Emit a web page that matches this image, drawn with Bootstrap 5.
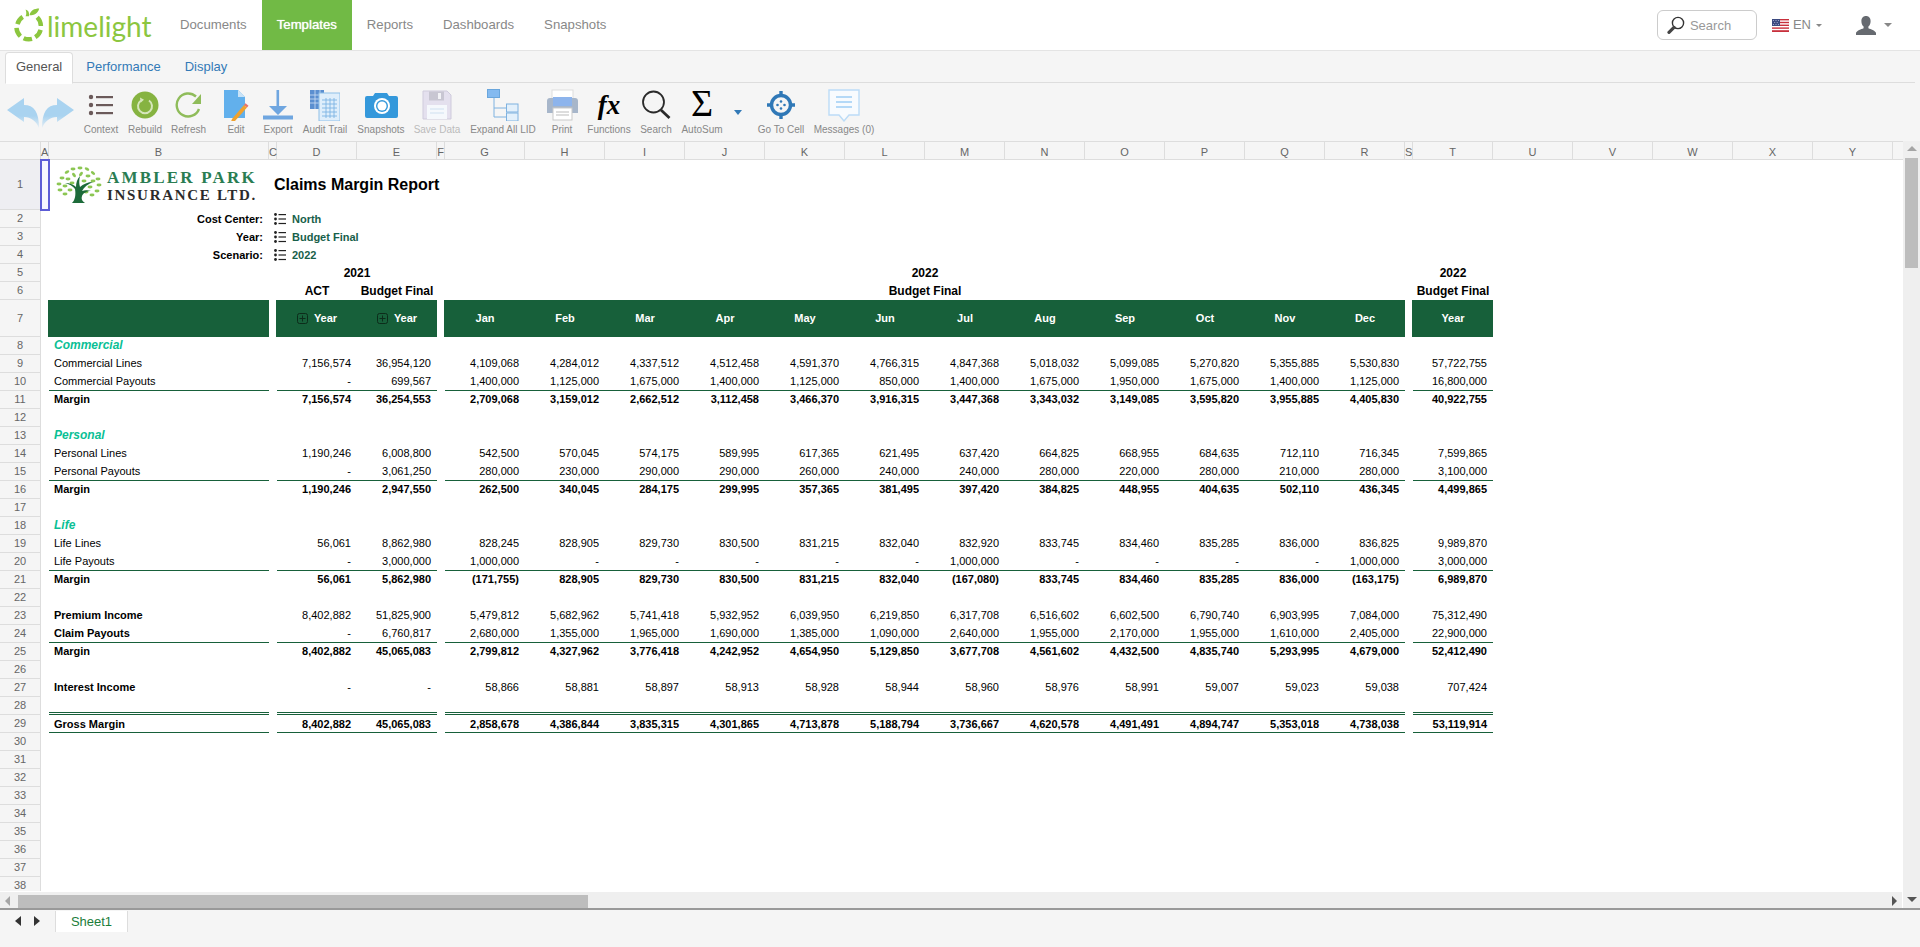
<!DOCTYPE html>
<html lang="en">
<head>
<meta charset="utf-8">
<title>Claims Margin Report</title>
<link rel="stylesheet" href="https://cdn.jsdelivr.net/npm/bootstrap@5.3.0/dist/css/bootstrap.min.css">
<style>
html,body{height:947px;overflow:hidden}
body{background:#f5f5f5;font-family:"Liberation Sans",Arial,sans-serif;font-size:14px;color:#000}
.app-frame{height:947px}
.top-bar{height:51px;background:#fff;border-bottom:1px solid #e4e4e4;padding:0}
.brand-box{flex:none;width:165px;height:50px;padding:7px 0 0 13px;margin:0;gap:3px;text-decoration:none}
.brand-box svg{flex:none}
.brand-word{font-family:Lato,"Open Sans",sans-serif;font-size:28px;line-height:34px;margin-top:2px;color:#8cc63f;font-weight:400}
.navbar-expand.top-bar .navbar-nav .nav-link{height:50px;padding:0 15px;line-height:50px;color:#888;font-size:13.2px}
.navbar-expand.top-bar .navbar-nav .nav-link.active{background:#71ba45;color:#fff;text-shadow:0 0 1px #fff}
.tools-right{margin-top:10px}
.find-box{width:100px;height:30px;border:1px solid #ccc;border-radius:6px;background:#fff;padding:0 0 0 9px;gap:5px;margin-right:15px}
.find-input{border:0;padding:0;width:62px;font-size:13px;height:26px;background:transparent;box-shadow:none;outline:0}
.find-input::placeholder{color:#999}
.lang-pick{color:#888;font-size:13px;gap:4px;margin-right:34px;text-decoration:none}
.user-pick{color:#888;margin-right:28px;gap:7px;text-decoration:none}
.lang-pick.dropdown-toggle::after,.user-pick.dropdown-toggle::after{margin-left:1px;border-top-color:#888}
.ribbon-tabs{height:32px;margin:0 5px 0 5px;padding-top:1px;border-bottom:1px solid #ddd;font-size:13px}
.ribbon-tabs .nav-link{padding:5px 10px 5px 12px;height:31px;line-height:17px;color:#337ab7;border-width:1px}
.ribbon-tabs .nav-link.active{padding:5px 10px;height:32px;color:#555;background:#fff;border-color:#ddd #ddd #fff;border-radius:4px 4px 0 0}
.tool-strip{height:58px;padding-left:5px}
.tool-item{flex:none;height:58px;color:#888;font-size:10px;text-decoration:none;text-align:center;white-space:nowrap}
.tool-glyph{height:41px;display:flex;align-items:center;justify-content:center;padding-top:3px}
.tool-label{line-height:12px}
.tool-off{color:#bbb}
.w32{width:32px}.w28{width:28px}.w43{width:43px}.w44{width:44px}.w46{width:46px}.w48{width:48px}.w50{width:50px}.w52{width:52px}.w58{width:58px}.w62{width:62px}.w68{width:68px}.w70{width:70px}.w74{width:74px}
.fx-mark{font-family:"Liberation Serif",serif;font-style:italic;font-weight:700;font-size:27px;line-height:34px;color:#000}
.sum-mark{display:block;font-family:"Liberation Serif",serif;font-size:38px;line-height:36px;color:#000;margin-bottom:4px}
.drop-tip{width:0;height:0;border:4.5px solid transparent;border-top:5px solid #337ab7;border-bottom:0;margin-top:27px}
.sheet-view{height:767px}
.sheet-port{width:1903px;height:750px;overflow:hidden;background:#fff}
.sheet-grid{table-layout:fixed;width:1903px;border-collapse:separate;border-spacing:0;font-size:11px;line-height:14px;background:#fff}
.sheet-grid td,.sheet-grid th{height:18px;padding:0 0 1px;white-space:nowrap;vertical-align:middle}
.sheet-grid td{text-align:right;padding:0 6px 2px 0;color:#000}
.sheet-grid td.sp{padding:0}
.sheet-grid tr.col-heads th{height:19px;padding:2px 0 0;background:#f5f5f5;border-top:1px solid #ddd;border-bottom:1px solid #ddd;border-right:1px solid #ddd;font-weight:400;color:#666;text-align:center;font-size:11px}
.sheet-grid tr.col-heads th:last-child{border-right:0}
.sheet-grid tbody th{background:#f5f5f5;border-right:1px solid #ddd;border-bottom:1px solid #ddd;font-weight:400;color:#666;text-align:center;font-size:11px}
.sheet-grid tbody tr.tall-row>th{height:50px;background:#eeeef2}
.sheet-grid td.sel-cell{background:#f6f6ff;outline:2px solid #5c5cd6;outline-offset:-1px;padding:0}
.sheet-grid td.lab{text-align:left;padding-left:5px;padding-right:0}
.sheet-grid td.tag{text-align:right;font-weight:700;padding:0 6px 1px 0}
.sheet-grid td.pick{text-align:left;padding:0 0 1px 5px;color:#17604a;font-weight:700}
.pick-row{gap:6px}
.sheet-grid tr.u td{padding-bottom:1px}
.sheet-grid tr.b td{font-weight:700}
.sheet-grid tr.b.u td{padding-bottom:0}
.sheet-grid td.sec{text-align:left;padding-left:5px;color:#0abf95;font-weight:700;font-style:italic;font-size:12px}
.sheet-grid td.hc{text-align:center;font-weight:700;font-size:12px;padding:0 0 1px}
.sheet-grid td.title-cell{text-align:left;padding:0 0 0 5px;font-size:16px;font-weight:700;line-height:20px}
.sheet-grid tr.band>th{height:37px}
.sheet-grid tr.band td:not(.sp){background:#17603a;color:#fff;font-weight:700;text-align:center;padding:0 0 1px;height:37px}
.sheet-grid tr.band td.edge{box-shadow:-1px 0 0 #17603a}
.sheet-grid tr.u td:not(.sp){border-bottom:1px solid #17603a}
.sheet-grid tr.u td.sp{padding:0}
.sheet-grid tr.dbl td:not(.sp){border-bottom:3px double #17603a}
.fold-row{gap:6px}
.amb-logo{gap:5px;padding-left:7px}
.amb-logo svg{flex:none}
.amb-words{line-height:1;font-family:"Liberation Serif",serif;text-align:left;white-space:nowrap}
.amb-top{font-size:17px;font-weight:700;color:#2a7d52;letter-spacing:2.2px;line-height:19px}
.amb-bot{font-size:15px;color:#2b2b2b;font-weight:700;letter-spacing:1.7px;line-height:16px}
.v-rail{width:17px;height:767px;background:#efefef;padding-top:5px}
.v-thumb{width:13px;height:110px;background:#bdbdbd;margin-top:7px}
.tri-up{width:0;height:0;border:5px solid transparent;border-top:0;border-bottom:5px solid #a5a5a5}
.tri-dn{width:0;height:0;border:5px solid transparent;border-bottom:0;border-top:5px solid #555;margin-top:auto;margin-bottom:6px}
.h-strip{width:1903px;height:17px;background:#fff;padding-top:1px}
.h-rail{height:16px;width:1902px;background:#efefef;padding:3px 5px 1px 5px}
.h-thumb{width:570px;height:13px;background:#bdbdbd;margin-left:8px}
.tri-lf{width:0;height:0;border:5px solid transparent;border-left:0;border-right:5px solid #a5a5a5}
.tri-rt{width:0;height:0;border:5px solid transparent;border-right:0;border-left:5px solid #555;margin-left:auto;margin-right:0}
.sheet-tabs{height:38px;border-top:2px solid #999;padding-left:15px;padding-top:1px;margin-top:0}
.step-lf,.step-rt{width:0;height:0;border:5.5px solid transparent;margin-top:5px}
.step-lf{border-left:0;border-right:6px solid #333}
.step-rt{border-right:0;border-left:6px solid #333;margin-left:13px}
.sheet-tab{width:73px;height:21px;margin-left:15px;background:#fff;border:1px solid #ddd;border-width:0 1px;color:#1b7d3a;font-size:13px;line-height:21px;text-align:center;text-decoration:none}
</style>
</head>
<body>
<div class="app-frame d-flex flex-column">

<nav class="navbar navbar-expand top-bar flex-nowrap align-items-start">
  <a class="navbar-brand d-flex align-items-start brand-box" href="#">
    <svg width="31" height="36" viewBox="0 0 32 36" aria-hidden="true">
      <g fill="none" stroke="#8cc63f" stroke-width="4.6">
        <path d="M10 9.6A13 13 0 0 0 4.6 17"/><path d="M3.6 21A13 13 0 0 0 7.6 29.6"/><path d="M11 31.6A13 13 0 0 0 19.6 32.4"/><path d="M23 30.6A13 13 0 0 0 28.5 23"/><path d="M28.8 19A13 13 0 0 0 25 10"/>
      </g>
      <path d="M13 9c1-2 1-4 0-7 3 1 4 3 3.5 7zM17 8c1-5 5-7 10-7-1 5-5 7-10 7z" fill="#8cc63f"/>
    </svg>
    <span class="brand-word">limelight</span>
  </a>
  <ul class="navbar-nav">
    <li class="nav-item"><a class="nav-link" href="#">Documents</a></li>
    <li class="nav-item"><a class="nav-link active" href="#">Templates</a></li>
    <li class="nav-item"><a class="nav-link" href="#">Reports</a></li>
    <li class="nav-item"><a class="nav-link" href="#">Dashboards</a></li>
    <li class="nav-item"><a class="nav-link" href="#">Snapshots</a></li>
  </ul>
  <div class="d-flex align-items-center ms-auto tools-right">
    <div class="d-flex align-items-center find-box">
      <svg width="18" height="18" viewBox="0 0 18 18" aria-hidden="true"><circle cx="11" cy="7" r="5.6" fill="none" stroke="#333" stroke-width="1.4"/><path d="M7 11.4 2 16.4" stroke="#444" stroke-width="3.2" stroke-linecap="round"/></svg>
      <input class="find-input" type="text" placeholder="Search" aria-label="Search">
    </div>
    <a class="d-flex align-items-center dropdown-toggle lang-pick" href="#">
      <svg width="17" height="13" viewBox="0 0 17 13" aria-hidden="true"><rect width="17" height="13" fill="#fff"/><g fill="#c8303c"><rect width="17" height="1.4"/><rect y="2.8" width="17" height="1.4"/><rect y="5.6" width="17" height="1.4"/><rect y="8.4" width="17" height="1.4"/><rect y="11.2" width="17" height="1.8"/></g><rect width="8" height="7" fill="#3c4a80"/><g fill="#aeb5d6"><circle cx="1.5" cy="1.5" r=".6"/><circle cx="4" cy="1.5" r=".6"/><circle cx="6.5" cy="1.5" r=".6"/><circle cx="2.7" cy="3.5" r=".6"/><circle cx="5.2" cy="3.5" r=".6"/><circle cx="1.5" cy="5.5" r=".6"/><circle cx="4" cy="5.5" r=".6"/><circle cx="6.5" cy="5.5" r=".6"/></g></svg>
      <span>EN</span>
    </a>
    <a class="d-flex align-items-center dropdown-toggle user-pick" href="#" aria-label="User">
      <svg width="20" height="19" viewBox="0 0 20 19" aria-hidden="true"><path d="M10 0c3 0 4.6 2.2 4.6 5.2 0 2.4-1 4.2-2.2 5.4v1.600c2.600 1 6.400 2 7.600 4.600V19H0v-2.200c1.200-2.600 5-3.600 7.600-4.600v-1.600C6.400 9.400 5.400 7.600 5.400 5.200 5.400 2.200 7 0 10 0z" fill="#666a70"/></svg>
    </a>
  </div>
</nav>

<ul class="nav nav-tabs ribbon-tabs flex-nowrap">
  <li class="nav-item"><a class="nav-link active" href="#">General</a></li>
  <li class="nav-item"><a class="nav-link" href="#">Performance</a></li>
  <li class="nav-item"><a class="nav-link" href="#">Display</a></li>
</ul>

<div class="d-flex tool-strip">
  <a class="tool-item w74 d-flex" href="#" aria-label="Undo and redo">
    <svg width="72" height="50" viewBox="0 0 72 50" aria-hidden="true">
      <defs><linearGradient id="fadeTail" x1="0" y1="0" x2="0" y2="1"><stop offset=".6" stop-color="#a9d3f0"/><stop offset="1" stop-color="#a9d3f0" stop-opacity=".2"/></linearGradient></defs>
      <path d="M2 27 19 15v7c10 0 15 7 15 23-3-7-8-11-15-11v5z" fill="url(#fadeTail)"/>
      <path d="M69 27 52 15v7c-10 0-15 7-15 23 3-7 8-11 15-11v5z" fill="url(#fadeTail)"/>
    </svg>
  </a>
  <a class="tool-item w44" href="#"><div class="tool-glyph"><svg width="26" height="24" viewBox="0 0 26 24" aria-hidden="true"><g fill="#6b5a5a"><circle cx="3" cy="4" r="2.2"/><circle cx="3" cy="12" r="2.2"/><circle cx="3" cy="20" r="2.2"/><rect x="8" y="3" width="17" height="2.2"/><rect x="8" y="11" width="17" height="2.2"/><rect x="8" y="19" width="17" height="2.2"/></g></svg></div><div class="tool-label">Context</div></a>
  <a class="tool-item w44" href="#"><div class="tool-glyph"><svg width="28" height="28" viewBox="0 0 28 28" aria-hidden="true"><circle cx="14" cy="14" r="13.5" fill="#86b341"/><path d="M10 9.500a7 7 0 1 0 8 0" fill="none" stroke="#d6e6bb" stroke-width="2"/><path d="M9 6.500l4 2.200-3.400 3z" fill="#d6e6bb"/></svg></div><div class="tool-label">Rebuild</div></a>
  <a class="tool-item w43" href="#"><div class="tool-glyph"><svg width="28" height="28" viewBox="0 0 28 28" aria-hidden="true"><path d="M24 18A11.500 11.500 0 1 1 21 5.500" fill="none" stroke="#8fbc5a" stroke-width="2.400"/><path d="M26 3v10h-9z" fill="#8fbc5a"/></svg></div><div class="tool-label">Refresh</div></a>
  <a class="tool-item w52" href="#"><div class="tool-glyph"><svg width="26" height="32" viewBox="0 0 26 32" aria-hidden="true"><path d="M1 1h14l7 7v21H1z" fill="#62b0ec"/><path d="M15 1v7h7z" fill="#c9e3f7"/><path d="M9 30 21 16l3 2.500L12 32l-4 .5z" fill="#f0a22e"/><path d="M21 16l1.500-1.800 3 2.500-1.500 1.800z" fill="#e9746a"/></svg></div><div class="tool-label">Edit</div></a>
  <a class="tool-item w32" href="#"><div class="tool-glyph"><svg width="32" height="32" viewBox="0 0 32 32" aria-hidden="true"><path d="M14.500 1h2.600v16H25L16 26 7 17h7.500z" fill="#6fa6e0"/><rect x="1" y="26.500" width="30" height="4" fill="#6fa6e0"/></svg></div><div class="tool-label">Export</div></a>
  <a class="tool-item w62" href="#"><div class="tool-glyph"><svg width="30" height="32" viewBox="0 0 30 32" aria-hidden="true"><rect x="0" y="1" width="14" height="19" fill="#5b8fd0"/><g stroke="#cfe0f5" stroke-width=".8"><path d="M0 6h14M0 10h14M0 14h14M5 1v19M10 1v19"/></g><rect x="9" y="4" width="21" height="28" fill="#dfeefb" stroke="#8fc0e8"/><g stroke="#7db3e3" stroke-width=".9"><path d="M12 11h15M12 15h15M12 19h15M12 23h15M12 27h15M16 9v20M20 9v20M24 9v20"/></g></svg></div><div class="tool-label">Audit Trail</div></a>
  <a class="tool-item w50" href="#"><div class="tool-glyph"><svg width="33" height="26" viewBox="0 0 33 26" aria-hidden="true"><path d="M2 4h6l2-3h12l2 3h7a2 2 0 0 1 2 2v18a2 2 0 0 1-2 2H2a2 2 0 0 1-2-2V6a2 2 0 0 1 2-2z" fill="#3498db"/><circle cx="17" cy="14" r="8" fill="#fff"/><circle cx="17" cy="14" r="6" fill="#3498db"/><circle cx="17" cy="14" r="4.600" fill="#fff"/></svg></div><div class="tool-label">Snapshots</div></a>
  <a class="tool-item w62 tool-off" href="#"><div class="tool-glyph"><svg width="30" height="30" viewBox="0 0 30 30" aria-hidden="true"><path d="M1 1h24l4 4v24H1z" fill="#e4e0ee" stroke="#cfcbdc"/><rect x="7" y="1.500" width="15" height="9" fill="#c8c6d2"/><rect x="16" y="3" width="3" height="6" fill="#f2f2f6"/><rect x="5" y="15" width="20" height="14" fill="#f5f8fc"/><path d="M8 19h14M8 23h14" stroke="#cfe0f0"/></svg></div><div class="tool-label">Save Data</div></a>
  <a class="tool-item w70" href="#"><div class="tool-glyph"><svg width="32" height="32" viewBox="0 0 32 32" aria-hidden="true"><path d="M7 8v11h12M7 19v9h12" fill="none" stroke="#7fb2e0" stroke-width="1"/><rect x="0.500" y="0.500" width="12" height="8" fill="#84baf0" stroke="#6aa6dc"/><rect x="19.500" y="15" width="11.500" height="8" fill="#e3f0fb" stroke="#7fb2e0"/><rect x="19.500" y="24" width="11.500" height="8" fill="#e3f0fb" stroke="#7fb2e0"/></svg></div><div class="tool-label">Expand All LID</div></a>
  <a class="tool-item w48" href="#"><div class="tool-glyph"><svg width="31" height="32" viewBox="0 0 31 32" aria-hidden="true"><rect x="5" y="1" width="21" height="10" fill="#fff" stroke="#ddd"/><path d="M3 9h25a3 3 0 0 1 3 3v12H0V12a3 3 0 0 1 3-3z" fill="#a7b6ca"/><rect x="6" y="8" width="19" height="9" fill="#8db4ec"/><rect x="6" y="19" width="19" height="12" fill="#fff" stroke="#c9c9c9"/><path d="M9 23h13M9 26h13" stroke="#bbb"/></svg></div><div class="tool-label">Print</div></a>
  <a class="tool-item w46" href="#"><div class="tool-glyph"><span class="fx-mark">fx</span></div><div class="tool-label">Functions</div></a>
  <a class="tool-item w48" href="#"><div class="tool-glyph"><svg width="30" height="30" viewBox="0 0 30 30" aria-hidden="true"><circle cx="12.500" cy="12" r="10.500" fill="none" stroke="#2a2a2a" stroke-width="1.800"/><path d="M20 20l8.500 8" stroke="#2a2a2a" stroke-width="2.800"/></svg></div><div class="tool-label">Search</div></a>
  <a class="tool-item w44" href="#"><div class="tool-glyph"><span class="sum-mark">Σ</span></div><div class="tool-label">AutoSum</div></a>
  <div class="tool-item w28 d-flex justify-content-center"><div class="drop-tip"></div></div>
  <a class="tool-item w58" href="#"><div class="tool-glyph"><svg width="28" height="28" viewBox="0 0 28 28" aria-hidden="true"><circle cx="14" cy="14" r="9.500" fill="none" stroke="#2f78b7" stroke-width="3.400"/><path d="M14 0v6M14 22v6M0 14h6M22 14h6" stroke="#2f78b7" stroke-width="3.400"/><circle cx="14" cy="10.500" r="1.300" fill="#2f78b7"/><circle cx="10.500" cy="14" r="1.300" fill="#2f78b7"/><circle cx="17.500" cy="14" r="1.300" fill="#2f78b7"/><circle cx="14" cy="17.500" r="1.300" fill="#2f78b7"/></svg></div><div class="tool-label">Go To Cell</div></a>
  <a class="tool-item w68" href="#"><div class="tool-glyph"><svg width="32" height="33" viewBox="0 0 32 33" aria-hidden="true"><path d="M1 1h30v25H21l-5 6-5-6H1z" fill="#f8fbfe" stroke="#bcdcf7" stroke-width="1.400"/><path d="M8 8h16M8 13h16M8 18h16" stroke="#b5d9f7" stroke-width="2"/></svg></div><div class="tool-label">Messages (0)</div></a>
</div>

<div class="d-flex sheet-view">
  <div class="d-flex flex-column">
    <div class="sheet-port">
      <table class="sheet-grid">
        <colgroup><col style="width:41px"><col style="width:8px"><col style="width:220px"><col style="width:8px"><col style="width:80px"><col style="width:80px"><col style="width:8px"><col style="width:80px"><col style="width:80px"><col style="width:80px"><col style="width:80px"><col style="width:80px"><col style="width:80px"><col style="width:80px"><col style="width:80px"><col style="width:80px"><col style="width:80px"><col style="width:80px"><col style="width:80px"><col style="width:8px"><col style="width:80px"><col style="width:80px"><col style="width:80px"><col style="width:80px"><col style="width:80px"><col style="width:80px"><col style="width:10px"></colgroup>
        <thead><tr class="col-heads"><th></th><th>A</th><th>B</th><th>C</th><th>D</th><th>E</th><th>F</th><th>G</th><th>H</th><th>I</th><th>J</th><th>K</th><th>L</th><th>M</th><th>N</th><th>O</th><th>P</th><th>Q</th><th>R</th><th>S</th><th>T</th><th>U</th><th>V</th><th>W</th><th>X</th><th>Y</th><th></th></tr></thead>
        <tbody>
<tr class="tall-row"><th>1</th><td class="sel-cell"></td><td class="sp">
  <div class="d-flex align-items-center amb-logo">
    <svg width="46" height="38" viewBox="0 0 46 38" aria-hidden="true">
      <g fill="#8cc653"><ellipse cx="6" cy="12" rx="2.500" ry="1.400"/><ellipse cx="11" cy="6" rx="2.500" ry="1.400" transform="rotate(-30 11 6)"/><ellipse cx="17" cy="3" rx="2.500" ry="1.400"/><ellipse cx="24" cy="2" rx="2.500" ry="1.400"/><ellipse cx="31" cy="3" rx="2.500" ry="1.400" transform="rotate(30 31 3)"/><ellipse cx="37" cy="7" rx="2.500" ry="1.400" transform="rotate(40 37 7)"/><ellipse cx="42" cy="13" rx="2.500" ry="1.400"/><ellipse cx="43" cy="19" rx="2.500" ry="1.400"/><ellipse cx="41" cy="25" rx="2.500" ry="1.400"/><ellipse cx="36" cy="29" rx="2.500" ry="1.400"/><ellipse cx="3" cy="18" rx="2.500" ry="1.400"/><ellipse cx="4" cy="24" rx="2.500" ry="1.400"/><ellipse cx="9" cy="28" rx="2.500" ry="1.400"/><ellipse cx="12" cy="13" rx="2.500" ry="1.400"/><ellipse cx="18" cy="9" rx="2.500" ry="1.400" transform="rotate(50 18 9)"/><ellipse cx="25" cy="8" rx="2.500" ry="1.400" transform="rotate(-50 25 8)"/><ellipse cx="32" cy="10" rx="2.500" ry="1.400"/><ellipse cx="37" cy="15" rx="2.500" ry="1.400"/><ellipse cx="34" cy="21" rx="2.500" ry="1.400"/><ellipse cx="28" cy="15" rx="2.500" ry="1.400"/><ellipse cx="9" cy="20" rx="2.500" ry="1.400"/><ellipse cx="16" cy="17" rx="2.500" ry="1.400"/><ellipse cx="14" cy="24" rx="2.500" ry="1.400"/><ellipse cx="30" cy="26" rx="2.500" ry="1.400"/></g>
      <path d="M16 37c3-3 4-8 3-14-2-3-6-5-10-6 5 0 9 2 11 4 0-4 1-8 4-11-1 4-1 8 0 11 3-3 8-5 13-5-5 2-9 5-11 9 3-1 6-1 9 0-4 0-8 2-9 5-1 3 0 5 3 7z" fill="#1d6b3a"/>
    </svg>
    <div class="amb-words"><div class="amb-top">AMBLER PARK</div><div class="amb-bot">INSURANCE LTD.</div></div>
  </div>
</td><td class="title-cell" colspan="24">Claims Margin Report</td></tr>
<tr><th>2</th><td class="sp"></td><td class="tag">Cost Center:</td><td class="pick" colspan="24"><div class="d-flex align-items-center pick-row"><svg width="12" height="12" viewBox="0 0 12 12" aria-hidden="true"><g fill="#222"><circle cx="1.500" cy="1.500" r="1.400"/><circle cx="1.500" cy="6" r="1.400"/><circle cx="1.500" cy="10.500" r="1.400"/><rect x="4.500" y="1" width="7.500" height="1.200"/><rect x="4.500" y="5.400" width="7.500" height="1.200"/><rect x="4.500" y="9.900" width="7.500" height="1.200"/></g></svg><span>North</span></div></td></tr>
<tr><th>3</th><td class="sp"></td><td class="tag">Year:</td><td class="pick" colspan="24"><div class="d-flex align-items-center pick-row"><svg width="12" height="12" viewBox="0 0 12 12" aria-hidden="true"><g fill="#222"><circle cx="1.500" cy="1.500" r="1.400"/><circle cx="1.500" cy="6" r="1.400"/><circle cx="1.500" cy="10.500" r="1.400"/><rect x="4.500" y="1" width="7.500" height="1.200"/><rect x="4.500" y="5.400" width="7.500" height="1.200"/><rect x="4.500" y="9.900" width="7.500" height="1.200"/></g></svg><span>Budget Final</span></div></td></tr>
<tr><th>4</th><td class="sp"></td><td class="tag">Scenario:</td><td class="pick" colspan="24"><div class="d-flex align-items-center pick-row"><svg width="12" height="12" viewBox="0 0 12 12" aria-hidden="true"><g fill="#222"><circle cx="1.500" cy="1.500" r="1.400"/><circle cx="1.500" cy="6" r="1.400"/><circle cx="1.500" cy="10.500" r="1.400"/><rect x="4.500" y="1" width="7.500" height="1.200"/><rect x="4.500" y="5.400" width="7.500" height="1.200"/><rect x="4.500" y="9.900" width="7.500" height="1.200"/></g></svg><span>2022</span></div></td></tr>
<tr><th>5</th><td class="sp" colspan="3"></td><td class="hc" colspan="2">2021</td><td class="sp"></td><td class="hc" colspan="12">2022</td><td class="sp"></td><td class="hc">2022</td><td class="sp" colspan="6"></td></tr>
<tr><th>6</th><td class="sp" colspan="3"></td><td class="hc">ACT</td><td class="hc">Budget Final</td><td class="sp"></td><td class="hc" colspan="12">Budget Final</td><td class="sp"></td><td class="hc">Budget Final</td><td class="sp" colspan="6"></td></tr>
<tr class="band"><th>7</th><td class="sp"></td><td class="edge"></td><td class="sp"></td><td class="edge"><div class="d-flex justify-content-center align-items-center fold-row"><svg width="11" height="11" viewBox="0 0 11 11" aria-hidden="true"><rect x=".5" y=".5" width="10" height="10" rx="2" fill="none" stroke="#0c2c1a"/><path d="M2.500 5.500h6M5.500 2.500v6" stroke="#0c2c1a"/></svg><span>Year</span></div></td><td><div class="d-flex justify-content-center align-items-center fold-row"><svg width="11" height="11" viewBox="0 0 11 11" aria-hidden="true"><rect x=".5" y=".5" width="10" height="10" rx="2" fill="none" stroke="#0c2c1a"/><path d="M2.500 5.500h6M5.500 2.500v6" stroke="#0c2c1a"/></svg><span>Year</span></div></td><td class="sp"></td><td class="edge">Jan</td><td>Feb</td><td>Mar</td><td>Apr</td><td>May</td><td>Jun</td><td>Jul</td><td>Aug</td><td>Sep</td><td>Oct</td><td>Nov</td><td>Dec</td><td class="sp"></td><td class="edge">Year</td><td class="sp" colspan="6"></td></tr>
<tr><th>8</th><td class="sp"></td><td class="sec">Commercial</td><td class="sp" colspan="24"></td></tr>
<tr><th>9</th><td class="sp"></td><td class="lab">Commercial Lines</td><td class="sp"></td><td>7,156,574</td><td>36,954,120</td><td class="sp"></td><td>4,109,068</td><td>4,284,012</td><td>4,337,512</td><td>4,512,458</td><td>4,591,370</td><td>4,766,315</td><td>4,847,368</td><td>5,018,032</td><td>5,099,085</td><td>5,270,820</td><td>5,355,885</td><td>5,530,830</td><td class="sp"></td><td>57,722,755</td><td class="sp" colspan="6"></td></tr>
<tr class="u"><th>10</th><td class="sp"></td><td class="lab">Commercial Payouts</td><td class="sp"></td><td>-</td><td>699,567</td><td class="sp"></td><td>1,400,000</td><td>1,125,000</td><td>1,675,000</td><td>1,400,000</td><td>1,125,000</td><td>850,000</td><td>1,400,000</td><td>1,675,000</td><td>1,950,000</td><td>1,675,000</td><td>1,400,000</td><td>1,125,000</td><td class="sp"></td><td>16,800,000</td><td class="sp" colspan="6"></td></tr>
<tr class="b"><th>11</th><td class="sp"></td><td class="lab">Margin</td><td class="sp"></td><td>7,156,574</td><td>36,254,553</td><td class="sp"></td><td>2,709,068</td><td>3,159,012</td><td>2,662,512</td><td>3,112,458</td><td>3,466,370</td><td>3,916,315</td><td>3,447,368</td><td>3,343,032</td><td>3,149,085</td><td>3,595,820</td><td>3,955,885</td><td>4,405,830</td><td class="sp"></td><td>40,922,755</td><td class="sp" colspan="6"></td></tr>
<tr><th>12</th><td class="sp" colspan="26"></td></tr>
<tr><th>13</th><td class="sp"></td><td class="sec">Personal</td><td class="sp" colspan="24"></td></tr>
<tr><th>14</th><td class="sp"></td><td class="lab">Personal Lines</td><td class="sp"></td><td>1,190,246</td><td>6,008,800</td><td class="sp"></td><td>542,500</td><td>570,045</td><td>574,175</td><td>589,995</td><td>617,365</td><td>621,495</td><td>637,420</td><td>664,825</td><td>668,955</td><td>684,635</td><td>712,110</td><td>716,345</td><td class="sp"></td><td>7,599,865</td><td class="sp" colspan="6"></td></tr>
<tr class="u"><th>15</th><td class="sp"></td><td class="lab">Personal Payouts</td><td class="sp"></td><td>-</td><td>3,061,250</td><td class="sp"></td><td>280,000</td><td>230,000</td><td>290,000</td><td>290,000</td><td>260,000</td><td>240,000</td><td>240,000</td><td>280,000</td><td>220,000</td><td>280,000</td><td>210,000</td><td>280,000</td><td class="sp"></td><td>3,100,000</td><td class="sp" colspan="6"></td></tr>
<tr class="b"><th>16</th><td class="sp"></td><td class="lab">Margin</td><td class="sp"></td><td>1,190,246</td><td>2,947,550</td><td class="sp"></td><td>262,500</td><td>340,045</td><td>284,175</td><td>299,995</td><td>357,365</td><td>381,495</td><td>397,420</td><td>384,825</td><td>448,955</td><td>404,635</td><td>502,110</td><td>436,345</td><td class="sp"></td><td>4,499,865</td><td class="sp" colspan="6"></td></tr>
<tr><th>17</th><td class="sp" colspan="26"></td></tr>
<tr><th>18</th><td class="sp"></td><td class="sec">Life</td><td class="sp" colspan="24"></td></tr>
<tr><th>19</th><td class="sp"></td><td class="lab">Life Lines</td><td class="sp"></td><td>56,061</td><td>8,862,980</td><td class="sp"></td><td>828,245</td><td>828,905</td><td>829,730</td><td>830,500</td><td>831,215</td><td>832,040</td><td>832,920</td><td>833,745</td><td>834,460</td><td>835,285</td><td>836,000</td><td>836,825</td><td class="sp"></td><td>9,989,870</td><td class="sp" colspan="6"></td></tr>
<tr class="u"><th>20</th><td class="sp"></td><td class="lab">Life Payouts</td><td class="sp"></td><td>-</td><td>3,000,000</td><td class="sp"></td><td>1,000,000</td><td>-</td><td>-</td><td>-</td><td>-</td><td>-</td><td>1,000,000</td><td>-</td><td>-</td><td>-</td><td>-</td><td>1,000,000</td><td class="sp"></td><td>3,000,000</td><td class="sp" colspan="6"></td></tr>
<tr class="b"><th>21</th><td class="sp"></td><td class="lab">Margin</td><td class="sp"></td><td>56,061</td><td>5,862,980</td><td class="sp"></td><td>(171,755)</td><td>828,905</td><td>829,730</td><td>830,500</td><td>831,215</td><td>832,040</td><td>(167,080)</td><td>833,745</td><td>834,460</td><td>835,285</td><td>836,000</td><td>(163,175)</td><td class="sp"></td><td>6,989,870</td><td class="sp" colspan="6"></td></tr>
<tr><th>22</th><td class="sp" colspan="26"></td></tr>
<tr><th>23</th><td class="sp"></td><td class="lab fw-bold">Premium Income</td><td class="sp"></td><td>8,402,882</td><td>51,825,900</td><td class="sp"></td><td>5,479,812</td><td>5,682,962</td><td>5,741,418</td><td>5,932,952</td><td>6,039,950</td><td>6,219,850</td><td>6,317,708</td><td>6,516,602</td><td>6,602,500</td><td>6,790,740</td><td>6,903,995</td><td>7,084,000</td><td class="sp"></td><td>75,312,490</td><td class="sp" colspan="6"></td></tr>
<tr class="u"><th>24</th><td class="sp"></td><td class="lab fw-bold">Claim Payouts</td><td class="sp"></td><td>-</td><td>6,760,817</td><td class="sp"></td><td>2,680,000</td><td>1,355,000</td><td>1,965,000</td><td>1,690,000</td><td>1,385,000</td><td>1,090,000</td><td>2,640,000</td><td>1,955,000</td><td>2,170,000</td><td>1,955,000</td><td>1,610,000</td><td>2,405,000</td><td class="sp"></td><td>22,900,000</td><td class="sp" colspan="6"></td></tr>
<tr class="b"><th>25</th><td class="sp"></td><td class="lab">Margin</td><td class="sp"></td><td>8,402,882</td><td>45,065,083</td><td class="sp"></td><td>2,799,812</td><td>4,327,962</td><td>3,776,418</td><td>4,242,952</td><td>4,654,950</td><td>5,129,850</td><td>3,677,708</td><td>4,561,602</td><td>4,432,500</td><td>4,835,740</td><td>5,293,995</td><td>4,679,000</td><td class="sp"></td><td>52,412,490</td><td class="sp" colspan="6"></td></tr>
<tr><th>26</th><td class="sp" colspan="26"></td></tr>
<tr><th>27</th><td class="sp"></td><td class="lab fw-bold">Interest Income</td><td class="sp"></td><td>-</td><td>-</td><td class="sp"></td><td>58,866</td><td>58,881</td><td>58,897</td><td>58,913</td><td>58,928</td><td>58,944</td><td>58,960</td><td>58,976</td><td>58,991</td><td>59,007</td><td>59,023</td><td>59,038</td><td class="sp"></td><td>707,424</td><td class="sp" colspan="6"></td></tr>
<tr class="dbl"><th>28</th><td class="sp"></td><td></td><td class="sp"></td><td></td><td></td><td class="sp"></td><td></td><td></td><td></td><td></td><td></td><td></td><td></td><td></td><td></td><td></td><td></td><td></td><td class="sp"></td><td></td><td class="sp" colspan="6"></td></tr>
<tr class="b u"><th>29</th><td class="sp"></td><td class="lab">Gross Margin</td><td class="sp"></td><td>8,402,882</td><td>45,065,083</td><td class="sp"></td><td>2,858,678</td><td>4,386,844</td><td>3,835,315</td><td>4,301,865</td><td>4,713,878</td><td>5,188,794</td><td>3,736,667</td><td>4,620,578</td><td>4,491,491</td><td>4,894,747</td><td>5,353,018</td><td>4,738,038</td><td class="sp"></td><td>53,119,914</td><td class="sp" colspan="6"></td></tr>
<tr><th>30</th><td class="sp" colspan="26"></td></tr>
<tr><th>31</th><td class="sp" colspan="26"></td></tr>
<tr><th>32</th><td class="sp" colspan="26"></td></tr>
<tr><th>33</th><td class="sp" colspan="26"></td></tr>
<tr><th>34</th><td class="sp" colspan="26"></td></tr>
<tr><th>35</th><td class="sp" colspan="26"></td></tr>
<tr><th>36</th><td class="sp" colspan="26"></td></tr>
<tr><th>37</th><td class="sp" colspan="26"></td></tr>
<tr><th>38</th><td class="sp" colspan="26"></td></tr>
        </tbody>
      </table>
    </div>
    <div class="h-strip"><div class="d-flex align-items-center h-rail"><div class="tri-lf"></div><div class="h-thumb"></div><div class="tri-rt"></div></div></div>
  </div>
  <div class="d-flex flex-column align-items-center v-rail"><div class="tri-up"></div><div class="v-thumb"></div><div class="tri-dn"></div></div>
</div>

<div class="d-flex align-items-start sheet-tabs">
  <div class="step-lf"></div><div class="step-rt"></div>
  <a class="sheet-tab" href="#">Sheet1</a>
</div>

</div>
<script src="https://cdn.jsdelivr.net/npm/bootstrap@5.3.0/dist/js/bootstrap.bundle.min.js"></script>
</body>
</html>
